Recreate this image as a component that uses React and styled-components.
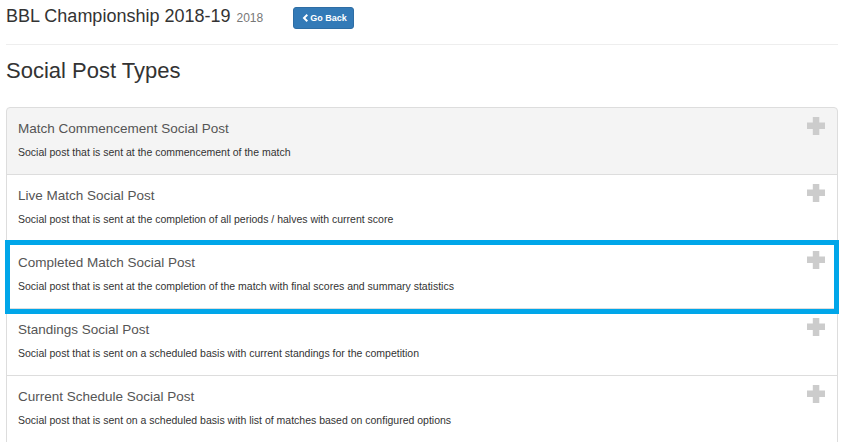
import React from 'react';
import styled, { createGlobalStyle } from 'styled-components';

const GlobalStyle = createGlobalStyle`
  body {
    margin: 0;
    background: #ffffff;
    font-family: 'Liberation Sans', Arial, Helvetica, sans-serif;
    color: #333;
  }
`;

const Page = styled.div`
  padding: 0 6px;
`;

const Header = styled.div`
  display: flex;
  align-items: flex-start;
`;

const Title = styled.h1`
  margin: 6px 0 0 0;
  font-size: 18px;
  line-height: 20px;
  font-weight: normal;
  color: #333;
`;

const Year = styled.small`
  margin-left: 6px;
  font-size: 12px;
  color: #777;
`;

const BackButton = styled.button`
  margin: 7px 0 0 30px;
  height: 22px;
  padding: 0 6px 0 8px;
  display: flex;
  align-items: center;
  gap: 2px;
  background: #337ab7;
  border: 1px solid #2e6da4;
  border-radius: 3px;
  color: #fff;
  font-family: 'Liberation Sans', Arial, sans-serif;
  font-size: 9px;
  font-weight: bold;
  cursor: pointer;
`;

const Rule = styled.hr`
  margin: 15px 0 0 0;
  border: 0;
  border-top: 1px solid #eee;
`;

const Heading = styled.h2`
  margin: 14px 0 24px 0;
  font-size: 22px;
  line-height: 24px;
  font-weight: normal;
  color: #333;
`;

const List = styled.div`
  display: flex;
  flex-direction: column;
`;

const Item = styled.div`
  position: relative;
  display: flex;
  justify-content: space-between;
  align-items: flex-start;
  padding: 9px 12px 14px 11px;
  background: ${(p) => (p.$active ? '#f4f4f4' : '#ffffff')};
  border: 1px solid #ddd;
  margin-bottom: -1px;
  &:first-child {
    border-radius: 4px 4px 0 0;
  }
  ${(p) =>
    p.$highlight &&
    `
    z-index: 1;
    &::after {
      content: '';
      position: absolute;
      top: -2px;
      left: -2px;
      right: -2px;
      bottom: -6px;
      border: 5px solid #00a6e9;
      pointer-events: none;
    }
  `}
`;

const ItemText = styled.div`
  display: flex;
  flex-direction: column;
  padding-top: 2px;
`;

const ItemTitle = styled.div`
  font-size: 13.5px;
  line-height: 20px;
  color: #555;
  margin-bottom: 5px;
`;

const ItemDesc = styled.div`
  font-size: 10.5px;
  line-height: 16px;
  color: #333;
`;

const PlusIcon = () => (
  <svg width="18" height="18" viewBox="0 0 18 18">
    <rect x="0" y="5.5" width="18" height="6.5" fill="#cccccc" />
    <rect x="5.8" y="0" width="6.5" height="18" fill="#cccccc" />
  </svg>
);

const ChevronLeft = () => (
  <svg width="6" height="8" viewBox="0 0 6 8">
    <path d="M4.6 0 L6 1.4 L3.4 4 L6 6.6 L4.6 8 L0.6 4 Z" fill="#ffffff" />
  </svg>
);

const postTypes = [
  {
    title: 'Match Commencement Social Post',
    desc: 'Social post that is sent at the commencement of the match',
    active: true,
  },
  {
    title: 'Live Match Social Post',
    desc: 'Social post that is sent at the completion of all periods / halves with current score',
  },
  {
    title: 'Completed Match Social Post',
    desc: 'Social post that is sent at the completion of the match with final scores and summary statistics',
    highlight: true,
  },
  {
    title: 'Standings Social Post',
    desc: 'Social post that is sent on a scheduled basis with current standings for the competition',
  },
  {
    title: 'Current Schedule Social Post',
    desc: 'Social post that is sent on a scheduled basis with list of matches based on configured options',
  },
];

const App = () => {
  return (
    <Page>
      <GlobalStyle />
      <Header>
        <Title>
          BBL Championship 2018-19<Year>2018</Year>
        </Title>
        <BackButton>
          <ChevronLeft />
          Go Back
        </BackButton>
      </Header>
      <Rule />
      <Heading>Social Post Types</Heading>
      <List>
        {postTypes.map((p) => (
          <Item key={p.title} $active={p.active} $highlight={p.highlight}>
            <ItemText>
              <ItemTitle>{p.title}</ItemTitle>
              <ItemDesc>{p.desc}</ItemDesc>
            </ItemText>
            <PlusIcon />
          </Item>
        ))}
      </List>
    </Page>
  );
};

export default App;
